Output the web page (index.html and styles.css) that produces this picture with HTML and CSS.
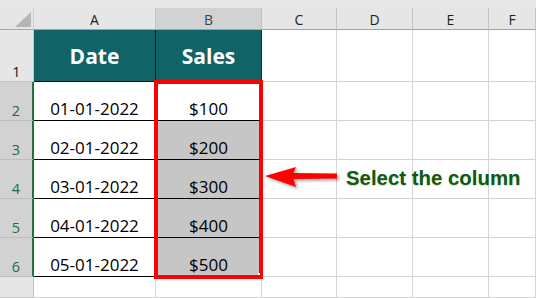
FILE: index.html
```html
<!DOCTYPE html>
<html>
<head>
<meta charset="utf-8">
<link rel="stylesheet" href="styles.css">
</head>
<body>
<div class="sheet">
  <div class="strip"></div>

  <div class="corner"><span class="tri"></span></div>
  <div class="colh">A</div>
  <div class="colh sel">B</div>
  <div class="colh">C</div>
  <div class="colh">D</div>
  <div class="colh">E</div>
  <div class="colh">F</div>

  <div class="rowh">1</div>
  <div class="cell head">Date</div>
  <div class="cell head endcol">Sales</div>
  <div class="cell"></div><div class="cell"></div><div class="cell"></div><div class="cell"></div>

  <div class="rowh on">2</div>
  <div class="cell date">01-01-2022</div>
  <div class="cell amt">$100</div>
  <div class="cell"></div><div class="cell"></div><div class="cell"></div><div class="cell"></div>

  <div class="rowh on">3</div>
  <div class="cell date">02-01-2022</div>
  <div class="cell amt hl">$200</div>
  <div class="cell"></div><div class="cell"></div><div class="cell"></div><div class="cell"></div>

  <div class="rowh on">4</div>
  <div class="cell date">03-01-2022</div>
  <div class="cell amt hl">$300</div>
  <div class="cell"></div><div class="cell"></div><div class="cell"></div><div class="cell"></div>

  <div class="rowh on">5</div>
  <div class="cell date">04-01-2022</div>
  <div class="cell amt hl">$400</div>
  <div class="cell"></div><div class="cell"></div><div class="cell"></div><div class="cell"></div>

  <div class="rowh on">6</div>
  <div class="cell date">05-01-2022</div>
  <div class="cell amt hl">$500</div>
  <div class="cell"></div><div class="cell"></div><div class="cell"></div><div class="cell"></div>

  <div class="rowh"></div>
  <div class="cell"></div><div class="cell"></div><div class="cell"></div>
  <div class="cell"></div><div class="cell"></div><div class="cell"></div>

  <div class="select-box"><span class="handle"></span></div>
  <svg class="arrow" width="80" height="32" viewBox="0 0 80 32">
    <polygon points="3,16 34,7 31.5,13 75,13.5 75,18.5 31.5,19 34,27" fill="#ff0000"/>
  </svg>
  <div class="callout">Select the column</div>
</div>
</body>
</html>
```

FILE: styles.css
```css
* { box-sizing: border-box; }

html, body {
  margin: 0;
  padding: 0;
  background: #ffffff;
  overflow: hidden;
}

.sheet {
  position: relative;
  width: 536px;
  height: 298px;
  display: grid;
  grid-template-columns: 34px 122px 106px 75px 76px 76px 47px;
  grid-template-rows: 8px 22px 52px repeat(5, 39px) 21px;
  font-family: "Open Sans", "DejaVu Sans", sans-serif;
  color: #000;
}

.strip {
  grid-column: 1 / -1;
  background: #e8e8e8;
}

.corner {
  background: #e6e6e6;
  border-right: 1px solid #cfcfcf;
  border-bottom: 1px solid #a8a8a8;
  display: flex;
  justify-content: flex-end;
  align-items: flex-end;
  padding: 0 2px 2px 0;
}

.tri {
  width: 16px;
  height: 15px;
  background: #b5b5b5;
  clip-path: polygon(100% 0, 100% 100%, 0 100%);
}

.colh {
  background: #e6e6e6;
  border-right: 1px solid #c3c3c3;
  border-bottom: 1px solid #a2a2a2;
  display: flex;
  align-items: center;
  justify-content: center;
  font-size: 14px;
  line-height: 19px;
  color: #222;
  padding-top: 1px;
}

.colh.sel {
  background: #d2d2d2;
  color: #444;
}

.rowh {
  background: #e6e6e6;
  border-right: 1px solid #c3c3c3;
  border-bottom: 1px solid #c8c8c8;
  display: flex;
  align-items: flex-end;
  justify-content: center;
  font-size: 14.5px;
  line-height: 19px;
  color: #222;
}

.rowh.on {
  background: #d2d2d2;
  color: #1f6b3d;
  border-right: 2px solid #217346;
  border-bottom: 1px solid #bdbdbd;
}

.cell {
  background: #fff;
  border-right: 1px solid #d4d4d4;
  border-bottom: 1px solid #d4d4d4;
  display: flex;
  align-items: flex-end;
  justify-content: center;
  font-size: 17px;
  line-height: 23px;
}

.cell.head {
  background: #106367;
  color: #fff;
  font-weight: 700;
  font-size: 21px;
  line-height: 28px;
  align-items: center;
  border-right: 1px solid #1a1a1a;
  border-bottom: 1px solid #111;
  padding-top: 1px;
}

.cell.head.endcol {
  border-right: 1px solid #0b3436;
}

.cell.date,
.cell.amt {
  border-bottom: 1px solid #000;
  border-right: 1px solid #000;
}

.cell.hl {
  background: #c6c6c6;
}

.select-box {
  position: absolute;
  left: 154px;
  top: 80px;
  width: 109px;
  height: 199px;
  border: 4px solid #ff0000;
}

.handle {
  position: absolute;
  left: 100px;
  top: 189px;
  width: 2px;
  height: 2px;
  background: #fff;
}

.arrow {
  position: absolute;
  left: 262px;
  top: 160px;
  filter: drop-shadow(2px 2px 1.5px rgba(0, 0, 0, 0.35));
}

.callout {
  position: absolute;
  left: 346px;
  top: 168px;
  font-family: "Liberation Sans", Arial, sans-serif;
  font-weight: 700;
  font-size: 20.4px;
  line-height: 20px;
  color: #0e5a17;
  white-space: nowrap;
  text-shadow: 0 1px 1px rgba(170, 170, 60, 0.45);
}
```
